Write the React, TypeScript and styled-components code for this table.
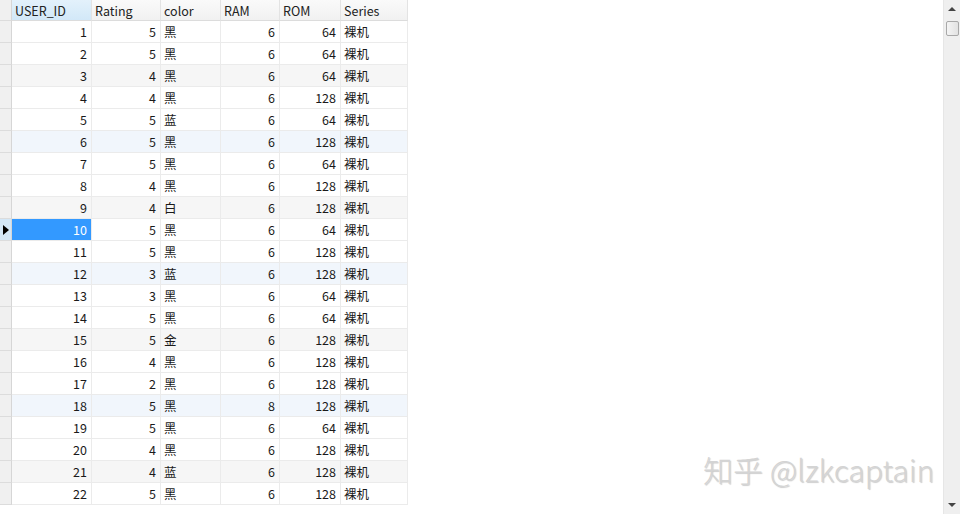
import React from "react";
import styled, { createGlobalStyle } from "styled-components";

const Global = createGlobalStyle`
  html, body { margin: 0; padding: 0; background: #fff; }
  body { font-family: "Noto Sans CJK SC", "Liberation Sans", sans-serif; }
`;

const rows: [number, number, string, number, number][] = [
  [1, 5, "黑", 6, 64],
  [2, 5, "黑", 6, 64],
  [3, 4, "黑", 6, 64],
  [4, 4, "黑", 6, 128],
  [5, 5, "蓝", 6, 64],
  [6, 5, "黑", 6, 128],
  [7, 5, "黑", 6, 64],
  [8, 4, "黑", 6, 128],
  [9, 4, "白", 6, 128],
  [10, 5, "黑", 6, 64],
  [11, 5, "黑", 6, 128],
  [12, 3, "蓝", 6, 128],
  [13, 3, "黑", 6, 64],
  [14, 5, "黑", 6, 64],
  [15, 5, "金", 6, 128],
  [16, 4, "黑", 6, 128],
  [17, 2, "黑", 6, 128],
  [18, 5, "黑", 8, 128],
  [19, 5, "黑", 6, 64],
  [20, 4, "黑", 6, 128],
  [21, 4, "蓝", 6, 128],
  [22, 5, "黑", 6, 128],
];

const COLS = "12px 80px 69px 60px 59px 61px 67px";

const Page = styled.div`
  position: relative;
  width: 960px;
  height: 514px;
  overflow: hidden;
  display: flex;
  background: #fff;
`;

const Grid = styled.div`
  flex: 1;
  display: flex;
  flex-direction: column;
  font-size: 12.5px;
  color: #1a1a1a;
`;

const Row = styled.div<{ $tint?: "gray" | "blue" | "none"; $head?: boolean }>`
  display: grid;
  grid-template-columns: ${COLS};
  width: 408px;
  height: ${(p) => (p.$head ? "21px" : "22px")};
  background: ${(p) =>
    p.$tint === "gray" ? "#f6f6f6" : p.$tint === "blue" ? "#f1f6fc" : "#fff"};
`;

const HeadCell = styled.div<{ $active?: boolean }>`
  box-sizing: border-box;
  height: 21px;
  padding: 0 3px;
  display: flex;
  align-items: center;
  border-right: 1px solid #e3e3e3;
  border-bottom: 1px solid #dcdcdc;
  background: ${(p) =>
    p.$active
      ? "linear-gradient(#e3f1fb, #d2e8f8)"
      : "linear-gradient(#fafafa, #f1f1f1)"};
  color: #222;
  white-space: nowrap;
`;

const Indicator = styled.div<{ $active?: boolean; $head?: boolean }>`
  box-sizing: border-box;
  height: ${(p) => (p.$head ? "21px" : "22px")};
  border-right: 1px solid #d6d6d6;
  border-bottom: 1px solid #dcdcdc;
  background: ${(p) => (p.$active ? "#d3e7f7" : "#f0f0f0")};
  display: flex;
  align-items: center;
  justify-content: center;
`;

const Arrow = styled.div`
  width: 0;
  height: 0;
  border-top: 5px solid transparent;
  border-bottom: 5px solid transparent;
  border-left: 6px solid #000;
  margin-left: 1px;
`;

const Cell = styled.div<{ $num?: boolean; $sel?: boolean }>`
  box-sizing: border-box;
  height: 22px;
  padding: ${(p) => (p.$num ? "0 4px 0 2px" : "0 2px 0 3px")};
  display: flex;
  align-items: center;
  justify-content: ${(p) => (p.$num ? "flex-end" : "flex-start")};
  border-right: 1px solid #ebebeb;
  border-bottom: 1px solid #ebebeb;
  background: ${(p) => (p.$sel ? "#3399ff" : "transparent")};
  color: ${(p) => (p.$sel ? "#fff" : "inherit")};
  white-space: nowrap;
`;

const Scrollbar = styled.div`
  width: 17px;
  height: 514px;
  box-sizing: border-box;
  background: #efefef;
  border-left: 1px solid #e6e6e6;
  display: flex;
  flex-direction: column;
  align-items: center;
`;

const ScrollArrow = styled.div<{ $down?: boolean }>`
  width: 16px;
  height: 18px;
  display: flex;
  align-items: center;
  justify-content: center;
  &::before {
    content: "";
    width: 0;
    height: 0;
    border-left: 4px solid transparent;
    border-right: 4px solid transparent;
    ${(p) =>
      p.$down
        ? "border-top: 4px solid #444;"
        : "border-bottom: 4px solid #444;"}
  }
`;

const Thumb = styled.div`
  width: 13px;
  height: 15px;
  margin-top: 3px;
  box-sizing: border-box;
  border: 1px solid #a8a8a8;
  border-radius: 2px;
  background: linear-gradient(90deg, #f4f4f4, #e2e2e2);
`;

const Track = styled.div`
  flex: 1;
`;

const Watermark = styled.div`
  position: absolute;
  left: 703px;
  top: 447px;
  font-family: "Noto Sans CJK SC", "Liberation Sans", sans-serif;
  font-size: 30px;
  font-weight: 300;
  color: #d4d4d4;
  text-shadow: 1px 1px 1px rgba(0, 0, 0, 0.2);
  white-space: nowrap;
`;

const headers = ["USER_ID", "Rating", "color", "RAM", "ROM", "Series"];

export default function App() {
  return (
    <>
      <Global />
      <Page>
        <Grid>
          <Row $tint="none" $head>
            <Indicator $head />
            {headers.map((h, i) => (
              <HeadCell key={h} $active={i === 0}>
                {h}
              </HeadCell>
            ))}
          </Row>
          {rows.map((r, idx) => {
            const n = idx + 1;
            const tint = n % 6 === 0 ? "blue" : n % 3 === 0 ? "gray" : "none";
            const sel = n === 10;
            return (
              <Row key={n} $tint={tint}>
                <Indicator $active={sel}>{sel && <Arrow />}</Indicator>
                <Cell $num $sel={sel}>
                  {r[0]}
                </Cell>
                <Cell $num>{r[1]}</Cell>
                <Cell>{r[2]}</Cell>
                <Cell $num>{r[3]}</Cell>
                <Cell $num>{r[4]}</Cell>
                <Cell>裸机</Cell>
              </Row>
            );
          })}
        </Grid>
        <Scrollbar>
          <ScrollArrow />
          <Thumb />
          <Track />
          <ScrollArrow $down />
        </Scrollbar>
        <Watermark>知乎 @lzkcaptain</Watermark>
      </Page>
    </>
  );
}
